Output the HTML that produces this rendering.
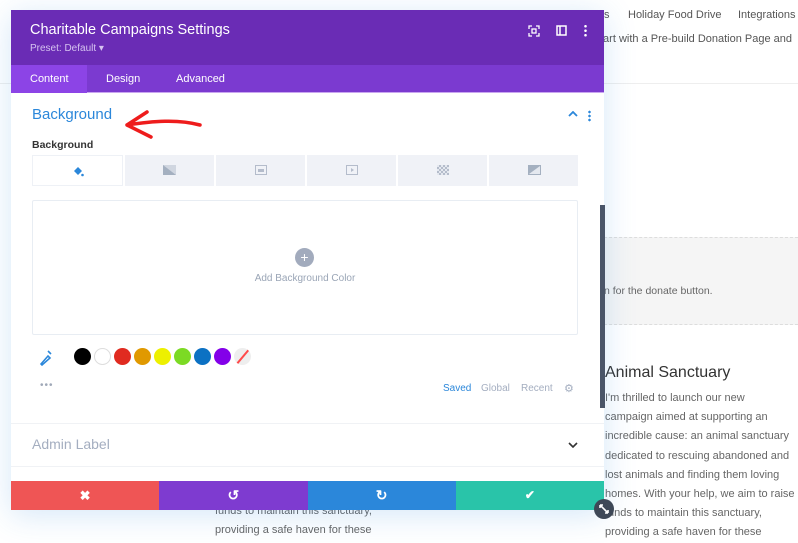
<!DOCTYPE html>
<html><head><meta charset="utf-8"><style>
*{box-sizing:border-box;margin:0;padding:0}
body{width:798px;height:542px;overflow:hidden;background:#fff;font-family:"Liberation Sans",sans-serif;position:relative}
.abs{position:absolute}
.bgtxt{color:#555;font-size:11.5px}
.p{color:#666;font-size:11px;line-height:19.2px}
</style></head><body>
<div class="abs" style="left:0;top:0;width:798px;height:84px;border-bottom:1px solid #eee;background:#fff"></div>
<div class="abs bgtxt" style="left:604px;top:9px;font-size:11px">s</div>
<div class="abs bgtxt" style="left:628px;top:9px;font-size:11px">Holiday Food Drive</div>
<div class="abs bgtxt" style="left:738px;top:9px;font-size:11px">Integrations</div>
<div class="abs bgtxt" style="left:600px;top:33px;font-size:11px">tart with a Pre-build Donation Page and</div>
<div class="abs" style="left:604px;top:237px;width:194px;height:88px;background:#f5f5f5;border-top:1px dashed #ddd;border-bottom:1px dashed #ddd"></div>
<div class="abs bgtxt" style="left:604px;top:285px;font-size:10.5px;color:#666">n for the donate button.</div>
<div class="abs" style="left:605px;top:364px;font-size:16px;color:#333">Animal Sanctuary</div>
<div class="abs p" style="left:605px;top:389px;width:200px">I'm thrilled to launch our new<br>campaign aimed at supporting an<br>incredible cause: an animal sanctuary<br>dedicated to rescuing abandoned and<br>lost animals and finding them loving<br>homes. With your help, we aim to raise<br>funds to maintain this sanctuary,<br>providing a safe haven for these</div>
<div class="abs p" style="left:215px;top:502px;width:200px">funds to maintain this sanctuary,<br>providing a safe haven for these</div>

<div class="abs" style="left:11px;top:10px;width:593px;height:500px;background:#fff;box-shadow:0 5px 30px rgba(43,135,218,.2);overflow:hidden">
 <div style="height:55px;background:#6a2cb5;position:relative">
  <div class="abs" style="left:19px;top:12px;color:#fff;font-size:14.5px">Charitable Campaigns Settings</div>
  <div class="abs" style="left:19px;top:33px;color:#d6c3f0;font-size:10px">Preset: Default ▾</div>
  <svg class="abs" style="left:517px;top:15px" width="12" height="12" viewBox="0 0 12 12" fill="none" stroke="#fff" stroke-width="1.3"><path d="M1 4V1h3M8 1h3v3M11 8v3H8M4 11H1V8"/><rect x="4" y="4" width="4" height="4"/></svg>
  <svg class="abs" style="left:545px;top:15px" width="11" height="11" viewBox="0 0 11 11" fill="none" stroke="#fff" stroke-width="1.5"><rect x="1" y="1" width="9" height="9"/><path d="M4 1v9"/></svg>
  <div class="abs" style="left:573px;top:14px;width:3px;height:13px;background:radial-gradient(circle,#fff 1.2px,transparent 1.4px) 0 0/3px 4.5px"></div>
 </div>
 <div style="height:28px;background:#7b3ad0;position:relative;border-bottom:1px solid #c9a6f0">
  <div class="abs" style="left:0;top:0;width:76px;height:28px;background:#8c44e6"></div>
  <div class="abs" style="left:19px;top:8px;color:#fff;font-size:11px">Content</div>
  <div class="abs" style="left:95px;top:8px;color:#fff;font-size:11px">Design</div>
  <div class="abs" style="left:165px;top:8px;color:#fff;font-size:11px">Advanced</div>
 </div>
 <div class="abs" style="left:21px;top:96px;color:#2b87da;font-size:15px">Background</div>
 <svg class="abs" style="left:112px;top:97px" width="95" height="35" viewBox="0 0 95 35" fill="none" stroke="#ee1c1c" stroke-width="3.5" stroke-linecap="round"><path d="M4 18C30 14 55 12 77 18M4 18L24 5M4 18L28 30"/></svg>
 <svg class="abs" style="left:557px;top:101px" width="10" height="6" viewBox="0 0 10 6" fill="none" stroke="#2b87da" stroke-width="1.8"><path d="M1 5l4-4 4 4"/></svg>
 <div class="abs" style="left:577px;top:100px;width:3px;height:12px;background:radial-gradient(circle,#2b87da 1.2px,transparent 1.4px) 0 0/3px 4px"></div>
 <div class="abs" style="left:21px;top:129px;color:#333;font-size:10.5px;font-weight:bold">Background</div>
 <div class="abs" style="left:21px;top:145px;width:546px;height:31px;display:flex;gap:2px">
  <div style="flex:1;background:#fff;border:1px solid #eef1f6;position:relative"><svg class="abs" style="left:39px;top:9px" width="12" height="12" viewBox="0 0 12 12"><path d="M2 6l4-4 4 4-4 4z" fill="#2b87da"/><circle cx="10.5" cy="10" r="1.3" fill="#2b87da"/></svg></div>
  <div style="flex:1;background:#f0f2f7;position:relative"><svg class="abs" style="left:38px;top:10px" width="13" height="10"><rect width="13" height="10" fill="#a4b0c0"/><path d="M0 0h13v10z" fill="#d0d6e0"/></svg></div>
  <div style="flex:1;background:#f0f2f7;position:relative"><svg class="abs" style="left:39px;top:10px" width="12" height="10"><rect x=".5" y=".5" width="11" height="9" fill="none" stroke="#b4bccb"/><rect x="3" y="4" width="6" height="3" fill="#b4bccb"/></svg></div>
  <div style="flex:1;background:#f0f2f7;position:relative"><svg class="abs" style="left:39px;top:10px" width="12" height="10"><rect x=".5" y=".5" width="11" height="9" fill="none" stroke="#b4bccb"/><path d="M5 3l3 2-3 2z" fill="#b4bccb"/></svg></div>
  <div style="flex:1;background:#f0f2f7;position:relative"><svg class="abs" style="left:39px;top:10px" width="12" height="10"><rect width="12" height="10" fill="#b4bccb"/><path d="M0 0h2v2H0zM4 0h2v2H4zM8 0h2v2H8zM2 2h2v2H2zM6 2h2v2H6zM10 2h2v2h-2zM0 4h2v2H0zM4 4h2v2H4zM8 4h2v2H8zM2 6h2v2H2zM6 6h2v2H6zM10 6h2v2h-2zM0 8h2v2H0zM4 8h2v2H4zM8 8h2v2H8z" fill="#e4e8ef"/></svg></div>
  <div style="flex:1;background:#f0f2f7;position:relative"><svg class="abs" style="left:39px;top:10px" width="13" height="10"><rect width="13" height="10" fill="#a4b0c0"/><path d="M1 9L12 1v8z" fill="#e4e8ef"/></svg></div>
 </div>
 <div class="abs" style="left:21px;top:190px;width:546px;height:135px;border:1px solid #e8edf3;border-radius:2px">
  <div class="abs" style="left:262px;top:47px;width:19px;height:19px;border-radius:50%;background:#a2abbd;color:#fff;font-size:14px;line-height:18px;text-align:center">+</div>
  <div class="abs" style="left:0;width:100%;top:72px;text-align:center;color:#9aa5b6;font-size:10px">Add Background Color</div>
 </div>
 <svg class="abs" style="left:28px;top:340px" width="13" height="16" viewBox="0 0 13 16" fill="none" stroke="#2b87da" stroke-width="1.6"><path d="M9 1l3 3M2 14l7-8 2 2-8 7z"/></svg>
 <div class="abs" style="left:63px;top:338px;display:flex;gap:3px">
  <span style="width:17px;height:17px;border-radius:50%;background:#000"></span>
  <span style="width:17px;height:17px;border-radius:50%;background:#fff;border:1px solid #ddd"></span>
  <span style="width:17px;height:17px;border-radius:50%;background:#e02b20"></span>
  <span style="width:17px;height:17px;border-radius:50%;background:#e09900"></span>
  <span style="width:17px;height:17px;border-radius:50%;background:#edf000"></span>
  <span style="width:17px;height:17px;border-radius:50%;background:#7cda24"></span>
  <span style="width:17px;height:17px;border-radius:50%;background:#0c71c3"></span>
  <span style="width:17px;height:17px;border-radius:50%;background:#8300e9"></span>
  <span style="width:17px;height:17px;border-radius:50%;background:#eee;position:relative;overflow:hidden"><span class="abs" style="left:8px;top:-1px;width:1.5px;height:19px;background:#ff4a4a;transform:rotate(40deg)"></span></span>
 </div>
 <div class="abs" style="left:29px;top:370px;color:#a0a9b8;font-size:10px;letter-spacing:1px">•••</div>
 <div class="abs" style="left:432px;top:373px;color:#2b87da;font-size:10px">Saved</div>
 <div class="abs" style="left:470px;top:373px;color:#a4aec0;font-size:10px">Global</div>
 <div class="abs" style="left:510px;top:373px;color:#a4aec0;font-size:10px">Recent</div>
 <div class="abs" style="left:553px;top:372px;color:#a4aec0;font-size:11px">⚙</div>
 <div class="abs" style="left:0;top:413px;width:593px;border-top:1px solid #f0f2f5"></div>
 <div class="abs" style="left:21px;top:426px;color:#a4aec0;font-size:14px">Admin Label</div>
 <svg class="abs" style="left:557px;top:432px" width="10" height="6" viewBox="0 0 10 6" fill="none" stroke="#333" stroke-width="1.6"><path d="M1 1l4 4 4-4"/></svg>
 <div class="abs" style="left:0;top:456px;width:593px;border-top:1px solid #f0f2f5"></div>
 <div class="abs" style="left:0;top:471px;width:593px;height:29px;display:flex">
  <div style="flex:1;background:#ef5555;color:#fff;text-align:center;font-size:13px;line-height:29px;font-weight:bold">✖</div>
  <div style="flex:1;background:#7e3bd0;color:#fff;text-align:center;font-size:14px;line-height:29px;font-weight:bold">↺</div>
  <div style="flex:1;background:#2b87da;color:#fff;text-align:center;font-size:14px;line-height:29px;font-weight:bold">↻</div>
  <div style="flex:1;background:#29c4a9;color:#fff;text-align:center;font-size:12px;line-height:29px;font-weight:bold">✔</div>
 </div>
</div>
<div class="abs" style="left:600px;top:205px;width:5px;height:203px;background:#4a5568"></div>
<div class="abs" style="left:594px;top:499px;width:20px;height:20px;border-radius:50%;background:#3e4857">
 <svg class="abs" style="left:4px;top:4px" width="12" height="12" viewBox="0 0 12 12" fill="none" stroke="#fff" stroke-width="1.6"><path d="M2 2l8 8M2 2h3M2 2v3M10 10H7M10 10V7"/></svg>
</div>
</body></html>
